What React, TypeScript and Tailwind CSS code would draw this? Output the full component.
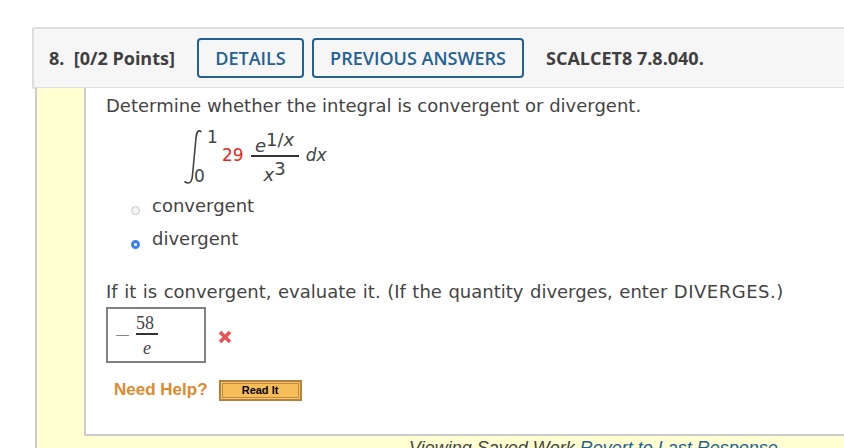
import React from 'react';

const sans = "font-['DejaVu_Sans',Verdana,sans-serif]";

function Integral() {
  return (
    <div className={`flex items-start h-[70px] ml-[77px] text-[#444] ${sans}`}>
      <svg width="20" height="56" viewBox="0 0 20 56" className="shrink-0 mt-[12px]">
        <path d="M18.5 3 C15.5 0.5 13.5 2.5 13 9 L9.5 46 C9 53 6.5 56 1.5 52.5" fill="none" stroke="#444" strokeWidth="1.6" />
      </svg>
      <div className="flex flex-col justify-between h-[54px] w-[28px] mt-[12px] -ml-[9px] text-[17px] leading-[16px]">
        <span className="pl-[13px]">1</span>
        <span className="-mb-[1px]">0</span>
      </div>
      <span className="text-[17px] leading-[20px] text-[#e8281e] mt-[28px] mr-[7px]">29</span>
      <div className="flex flex-col items-center w-[48px] mt-[16px] text-[18px] italic">
        <span className="leading-[20px] h-[22px] whitespace-nowrap pt-[3px]">
          e<span className="text-[18px] not-italic relative -top-[6px]">1/<i>x</i></span>
        </span>
        <span className="w-full h-[2px] bg-[#333]"></span>
        <span className="leading-[20px] h-[24px] whitespace-nowrap pt-[8px]">
          x<span className="text-[18px] not-italic relative -top-[6px]">3</span>
        </span>
      </div>
      <span className="text-[17px] leading-[20px] italic mt-[28px] ml-[7px]">dx</span>
    </div>
  );
}

function Choice({ label, checked }: { label: string; checked?: boolean }) {
  return (
    <div className="flex items-center h-[33px]">
      {checked ? (
        <span className="w-[9px] h-[9px] rounded-full border-[3px] border-[#3b82f0] bg-white mt-[12px]"></span>
      ) : (
        <span className="w-[9px] h-[9px] rounded-full border border-[#c8c8c8] bg-[#f4f4f4] mt-[9px]"></span>
      )}
      <span className="ml-[12px] text-[18px] text-[#444]">{label}</span>
    </div>
  );
}

export default function App() {
  return (
    <div className="w-[844px] h-[448px] overflow-hidden bg-white pt-[27px] pl-[32px] text-[#444]">
      <div className="w-[830px] h-[62px] border-2 border-[#dddddd] rounded-[2px] bg-[#f6f6f6] flex items-center font-['Open_Sans',sans-serif]">
        <span className="ml-[15px] text-[18px] font-bold text-[#3f3f3f] whitespace-pre w-[126px]">8.  [0/2 Points]</span>
        <button className="ml-[22px] w-[107px] h-[40px] border-2 border-[#236192] rounded-[4px] text-[#236192] text-[18px] font-semibold">DETAILS</button>
        <button className="ml-[8px] w-[212px] h-[40px] border-2 border-[#236192] rounded-[4px] text-[#236192] text-[18px] font-semibold">PREVIOUS ANSWERS</button>
        <span className="ml-[22px] text-[18px] font-bold text-[#3f3f3f]">SCALCET8 7.8.040.</span>
      </div>
      <div className="ml-[3px] w-[830px] h-[400px] border-l-2 border-[#cccccc] bg-[#ffffd2] pl-[47px]">
        <div className={`h-[348px] bg-white border-l-2 border-b-2 border-[#cccccc] pl-[20px] ${sans}`}>
          <p className="text-[18px] leading-[36px] h-[29px] -mt-[1px] text-[#444]">Determine whether the integral is convergent or divergent.</p>
          <Integral />
          <div className="ml-[25px] mt-[2px]">
            <Choice label="convergent" />
            <Choice label="divergent" checked />
          </div>
          <p className="text-[18px] [word-spacing:0.8px] leading-[24px] mt-[25px] whitespace-nowrap text-[#444]">
            If it is convergent, evaluate it. (If the quantity diverges, enter <span className="tracking-[0.5px]">DIVERGES.)</span>
          </p>
          <div className="flex items-center mt-[3px]">
            <div className="w-[100px] h-[56px] border-2 border-[#808080] flex items-center pl-[8px] font-['Liberation_Serif',serif] text-[#444]">
              <span className="w-[13px] h-[1px] bg-[#888] mr-[7px]"></span>
              <div className="flex flex-col w-[22px] text-[18px] leading-none">
                <span className="pb-[1px]">58</span>
                <span className="w-full h-[2px] bg-[#333]"></span>
                <span className="pt-[4px] pl-[7px] italic">e</span>
              </div>
            </div>
            <svg width="14" height="14" viewBox="0 0 14 14" className="ml-[12px] mt-[4px]">
              <path d="M2 2 L12 12 M12 2 L2 12" stroke="#e4555b" strokeWidth="3.6" />
            </svg>
          </div>
          <div className="flex items-center mt-[15px] ml-[8px] font-['Liberation_Sans',sans-serif]">
            <span className="text-[17px] font-bold text-[#e08a2e] leading-[24px]">Need Help?</span>
            <span className="ml-[11px] w-[83px] h-[21px] border-2 border-[#b5813a] bg-[#f6c76e] p-[1px] flex">
              <span className="flex-1 bg-[#f6bd58] border border-[#c08a40] flex items-center justify-center text-[11px] font-bold text-black leading-none">Read It</span>
            </span>
          </div>
        </div>
        <p className="text-[18px] italic leading-[20px] ml-[325px] mt-[2px] whitespace-nowrap font-['Liberation_Sans',sans-serif] text-[#444]">
          Viewing Saved Work <span className="text-[#236192]">Revert to Last Response</span>
        </p>
      </div>
    </div>
  );
}
